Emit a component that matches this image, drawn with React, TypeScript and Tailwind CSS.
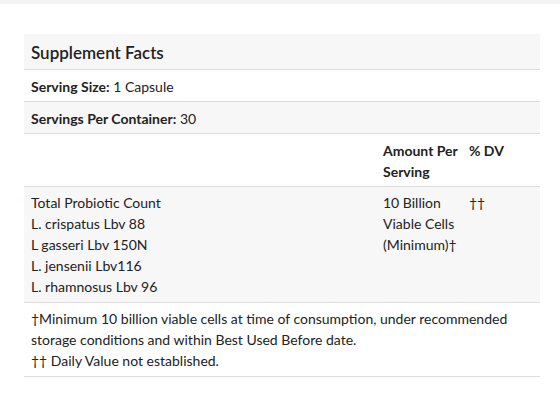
export default function App() {
  const strains = [
    "Total Probiotic Count",
    "L. crispatus Lbv 88",
    "L gasseri Lbv 150N",
    "L. jensenii Lbv116",
    "L. rhamnosus Lbv 96",
  ];

  return (
    <div className="min-h-[397px] w-[560px] bg-white font-['Lato',sans-serif] text-[14px] leading-[21px] text-[#222]">
      <div className="h-[4px] bg-[#f4f4f4]" />
      <div className="pl-[24px] pt-[30px]">
        <table className="w-[516px] table-fixed border-collapse">
          <colgroup>
            <col className="w-[352px]" />
            <col className="w-[86px]" />
            <col />
          </colgroup>
          <tbody>
            <tr className="border-b border-[#ddd] bg-[#f7f7f7]">
              <td colSpan={3} className="px-[7px] pt-[7px] pb-[5px] text-[17px] leading-[23px] font-semibold">
                Supplement Facts
              </td>
            </tr>
            <tr className="border-b border-[#ddd]">
              <td colSpan={3} className="px-[7px] pt-[6px] pb-[4px]">
                <span className="font-bold">Serving Size:</span> 1 Capsule
              </td>
            </tr>
            <tr className="border-b border-[#ddd] bg-[#f7f7f7]">
              <td colSpan={3} className="px-[7px] pt-[6px] pb-[4px]">
                <span className="font-bold">Servings Per Container:</span> 30
              </td>
            </tr>
            <tr className="border-b border-[#ddd]">
              <td className="px-[7px] pt-[6px] pb-[4px]" />
              <td className="pl-[7px] pr-[2px] pt-[6px] pb-[4px] align-top font-bold">Amount Per Serving</td>
              <td className="pl-[7px] pr-[2px] pt-[6px] pb-[4px] align-top font-bold">% DV</td>
            </tr>
            <tr className="border-b border-[#ddd] bg-[#f7f7f7]">
              <td className="px-[7px] pt-[5px] pb-[5px] align-top">
                {strains.map((s) => (
                  <div key={s}>{s}</div>
                ))}
              </td>
              <td className="pl-[7px] pr-[2px] pt-[5px] pb-[5px] align-top">10 Billion Viable Cells (Minimum)†</td>
              <td className="pl-[7px] pr-[2px] pt-[5px] pb-[5px] align-top">††</td>
            </tr>
            <tr className="border-b border-[#ddd]">
              <td colSpan={3} className="px-[7px] pt-[5px] pb-[5px]">
                †Minimum 10 billion viable cells at time of consumption, under recommended storage conditions and within Best Used Before date.
                <br />
                †† Daily Value not established.
              </td>
            </tr>
          </tbody>
        </table>
      </div>
    </div>
  );
}
